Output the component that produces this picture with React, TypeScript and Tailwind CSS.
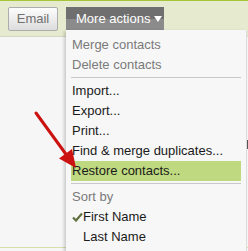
import React from "react";

const font = { fontFamily: '"Liberation Sans", Arial, sans-serif' };

function Item({ children, muted, active, indent, check }: { children: React.ReactNode; muted?: boolean; active?: boolean; indent?: boolean; check?: boolean }) {
  return (
    <div
      className={
        "relative h-[20px] leading-[20px] text-[13px] whitespace-nowrap " +
        (muted ? "text-[#7a7a7a] " : "text-[#1a1a1a] ") +
        (active ? "bg-[#bed97f] " : "") +
        (indent ? "pl-[12px]" : "pl-[1px]")
      }
    >
      {check && (
        <svg className="absolute left-[1px] top-[5px]" width="11" height="10" viewBox="0 0 11 10">
          <path d="M1 5.5 L4 8.5 L10 1.5" fill="none" stroke="#5f7140" strokeWidth="2.2" />
        </svg>
      )}
      {children}
    </div>
  );
}

function Sep({ top, bottom }: { top: string; bottom: string }) {
  return <div className={"h-px bg-[#c9c9c9] " + top + " " + bottom} />;
}

export default function App() {
  return (
    <div className="relative w-[248px] h-[251px] overflow-hidden bg-[#f6f6f6] flex flex-col" style={font}>
      <div className="h-px bg-[#a4c639]" />
      <div className="h-[36px] bg-[#e6ebd0] border-b border-[#d3d8c2] flex items-start pl-[8px] pt-[6px] gap-[8px]">
        <div className="w-[50px] h-[24px] rounded-[2px] border border-[#adadad] bg-gradient-to-b from-[#fdfdfd] to-[#dcdcdc] text-[#707070] text-[13px] flex items-center justify-center">
          Email
        </div>
        <div className="relative w-[98px] h-[24px] flex flex-col">
          <div className="h-[12px] bg-[#6f6f6f]" />
          <div className="h-[12px] bg-[#8b8b8b]" />
          <div className="absolute inset-0 flex items-center pl-[10px] text-white text-[13px] gap-[4px]">
            <span>More actions</span>
            <svg width="8" height="6" viewBox="0 0 8 6">
              <path d="M0 0 H8 L4 6 Z" fill="#ffffff" />
            </svg>
          </div>
        </div>
      </div>
      <div className="flex-1" />
      <div className="h-px bg-[#d4e0ac] mb-[3px]" />

      <div className="absolute left-[66px] top-[30px] w-[181px] h-[230px] bg-[#f7f7f7] border-r border-[#dcdcdc] shadow-[-2px_1px_3px_rgba(0,0,0,0.18)] px-[5px] pt-[5px]">
        <Item muted>Merge contacts</Item>
        <Item muted>Delete contacts</Item>
        <Sep top="mt-[2px]" bottom="mb-[3px]" />
        <Item>Import...</Item>
        <Item>Export...</Item>
        <Item>Print...</Item>
        <Item>Find &amp; merge duplicates...</Item>
        <Item active>Restore contacts...</Item>
        <Sep top="mt-[2px]" bottom="mb-[3px]" />
        <Item muted>Sort by</Item>
        <Item indent check>First Name</Item>
        <Item indent>Last Name</Item>
      </div>
      <div className="absolute left-[247px] top-[140px] w-[1px] h-[9px] bg-[#555]" />

      <svg className="absolute left-0 top-0 pointer-events-none" width="248" height="251" viewBox="0 0 248 251">
        <line x1="36" y1="113" x2="68" y2="157" stroke="#cc1111" strokeWidth="3" strokeLinecap="round" />
        <path d="M76 168 L59 158.5 L72 149 Z" fill="#cc1111" />
      </svg>
    </div>
  );
}
